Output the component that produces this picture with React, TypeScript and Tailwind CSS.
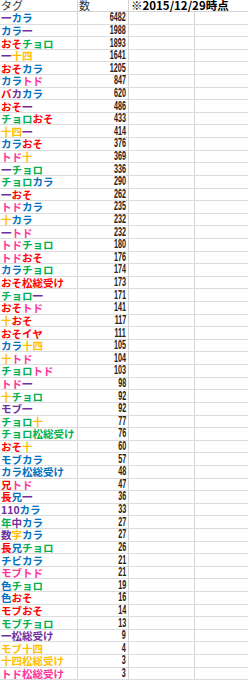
import React from "react";

type Seg = [string, string];

const colors: Record<string, string> = {
  p: "text-[#7030a0]",
  b: "text-[#0070c0]",
  r: "text-[#ff0000]",
  g: "text-[#00b050]",
  y: "text-[#ffc000]",
  k: "text-[#ff3399]",
};

// tag segments + count
const rows: [Seg[], number][] = [
  [[["一", "p"], ["カラ", "b"]], 6482],
  [[["カラ", "b"], ["一", "p"]], 1988],
  [[["おそ", "r"], ["チョロ", "g"]], 1893],
  [[["一", "p"], ["十四", "y"]], 1641],
  [[["おそ", "r"], ["カラ", "b"]], 1205],
  [[["カラ", "b"], ["トド", "k"]], 847],
  [[["バ", "r"], ["カ", "p"], ["カラ", "b"]], 620],
  [[["おそ", "r"], ["一", "p"]], 486],
  [[["チョロ", "g"], ["おそ", "r"]], 433],
  [[["十四", "y"], ["一", "p"]], 414],
  [[["カラ", "b"], ["おそ", "r"]], 376],
  [[["トド", "k"], ["十", "y"]], 369],
  [[["一", "p"], ["チョロ", "g"]], 336],
  [[["チョロ", "g"], ["カラ", "b"]], 290],
  [[["一", "p"], ["おそ", "r"]], 262],
  [[["トド", "k"], ["カラ", "b"]], 235],
  [[["十", "y"], ["カラ", "b"]], 232],
  [[["一", "p"], ["トド", "k"]], 232],
  [[["トド", "k"], ["チョロ", "g"]], 180],
  [[["トド", "k"], ["おそ", "r"]], 176],
  [[["カラ", "b"], ["チョロ", "g"]], 174],
  [[["おそ松総受け", "r"]], 173],
  [[["チョロ", "g"], ["一", "p"]], 171],
  [[["おそ", "r"], ["トド", "k"]], 141],
  [[["十", "y"], ["おそ", "r"]], 117],
  [[["おそイヤ", "r"]], 111],
  [[["カラ", "b"], ["十四", "y"]], 105],
  [[["十", "y"], ["トド", "k"]], 104],
  [[["チョロ", "g"], ["トド", "k"]], 103],
  [[["トド", "k"], ["一", "p"]], 98],
  [[["十", "y"], ["チョロ", "g"]], 92],
  [[["モブ一", "p"]], 92],
  [[["チョロ", "g"], ["十", "y"]], 77],
  [[["チョロ松総受け", "g"]], 76],
  [[["おそ", "r"], ["十", "y"]], 60],
  [[["モブカラ", "b"]], 57],
  [[["カラ松総受け", "b"]], 48],
  [[["兄", "r"], ["トド", "k"]], 47],
  [[["長", "r"], ["兄", "b"], ["一", "p"]], 36],
  [[["110", "p"], ["カラ", "b"]], 33],
  [[["年", "g"], ["中", "p"], ["カラ", "b"]], 27],
  [[["数", "p"], ["字", "y"], ["カラ", "b"]], 27],
  [[["長", "r"], ["兄", "b"], ["チョロ", "g"]], 26],
  [[["チビカラ", "b"]], 21],
  [[["モブトド", "k"]], 21],
  [[["色", "b"], ["チョロ", "g"]], 19],
  [[["色", "b"], ["おそ", "r"]], 16],
  [[["モブおそ", "r"]], 14],
  [[["モブチョロ", "g"]], 13],
  [[["一松総受け", "p"]], 9],
  [[["モブ十四", "y"]], 4],
  [[["十四松総受け", "y"]], 3],
  [[["トド松総受け", "k"]], 3],
];

const jp = "font-['Noto_Sans_CJK_JP',sans-serif]";

const Count: React.FC<{ n: number }> = ({ n }) => (
  <span className="inline-block origin-right scale-x-[0.6] font-['Liberation_Sans',sans-serif] text-[12px] font-bold leading-[11px] text-[#222]">
    {n}
  </span>
);

export default function App() {
  return (
    <div className={`w-[248px] h-[680px] overflow-hidden bg-white ${jp}`}>
      {/* header */}
      <div className="grid h-[12px] grid-cols-[78px_51px_119px] border-b border-[#d4d4d4]">
        <div className="flex items-center border-r border-[#d4d4d4] pl-[1px] text-[11px] leading-[11px] text-[#333]">
          タグ
        </div>
        <div className="flex items-center border-r border-[#d4d4d4] pl-[1px] text-[11px] leading-[11px] text-[#333]">
          数
        </div>
        <div className="flex items-center whitespace-nowrap pl-[2px] text-[11.5px] font-bold leading-[11px] text-black">
          ※2015/12/29時点
        </div>
      </div>

      {rows.map(([segs, n], i) => (
        <div
          key={i}
          className="grid h-[12.62px] grid-cols-[78px_51px_66px_53px] border-b border-[#dcdcdc]"
        >
          <div className="flex items-center whitespace-nowrap border-r border-[#d4d4d4] pl-[1px] text-[10.5px] font-bold leading-[11px]">
            {segs.map(([t, c], j) => (
              <span key={j} className={colors[c]}>
                {t}
              </span>
            ))}
          </div>
          <div className="flex items-center justify-end border-r border-[#d4d4d4] pr-[2px]">
            <Count n={n} />
          </div>
          <div className="border-r border-[#d4d4d4]" />
          <div />
        </div>
      ))}
    </div>
  );
}
